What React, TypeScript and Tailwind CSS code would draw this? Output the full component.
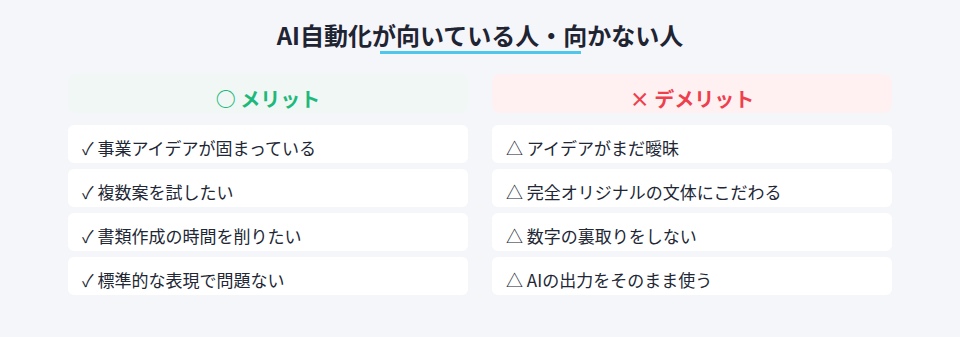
import React from 'react';

const pros = ['事業アイデアが固まっている', '複数案を試したい', '書類作成の時間を削りたい', '標準的な表現で問題ない'];
const cons = ['アイデアがまだ曖昧', '完全オリジナルの文体にこだわる', '数字の裏取りをしない', 'AIの出力をそのまま使う'];

const Column: React.FC<{ title: string; mark: string; items: string[]; good: boolean }> = ({ title, mark, items, good }) => (
  <div className="flex flex-col">
    <div
      className={`h-[39px] rounded-lg pt-[12px] text-center text-[20px] font-bold leading-[26px] ${
        good ? 'bg-[#f0f7f4] text-[#1db97b]' : 'bg-[#fff1f2] text-[#ee3f4d]'
      }`}
    >
      {mark} {title}
    </div>
    <div className="mt-[12px] flex flex-col gap-[6px]">
      {items.map(item => (
        <div key={item} className="h-[38px] rounded-md bg-white px-[14px] pt-[10px] text-[17px] leading-[26px] text-[#222735]">
          {good ? '✓' : '△'} {item}
        </div>
      ))}
    </div>
  </div>
);

export default function App() {
  return (
    <div
      className="h-[337px] w-[960px] bg-[#f5f6fa] pt-[19px]"
      style={{ fontFamily: '"Noto Sans CJK JP", "Noto Sans", sans-serif' }}
    >
      <h1 className="text-center text-[24px] font-bold leading-[32px] text-[#1f2433]">AI自動化が向いている人・向かない人</h1>
      <div className="mx-auto h-[3px] w-[201px] bg-[#4fc7ea]" />
      <div className="mx-auto mt-[20px] grid w-[824px] grid-cols-2 gap-[24px]">
        <Column title="メリット" mark="○" items={pros} good />
        <Column title="デメリット" mark="×" items={cons} good={false} />
      </div>
    </div>
  );
}
